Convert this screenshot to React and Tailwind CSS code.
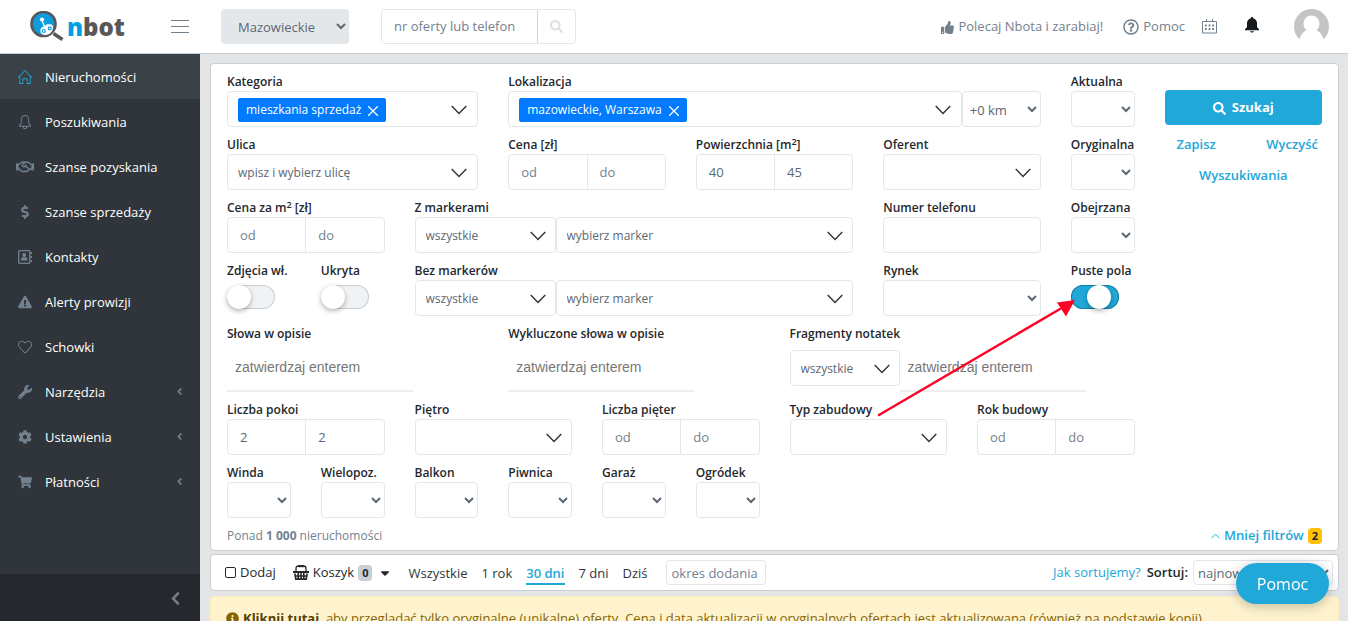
import {
  FaAngleLeft,
  FaCaretDown,
  FaChevronLeft,
  FaCog,
  FaDollarSign,
  FaExclamationTriangle,
  FaInfoCircle,
  FaRegHandshake,
  FaRegQuestionCircle,
  FaSearch,
  FaShoppingCart,
  FaThumbsUp,
  FaWrench,
} from 'react-icons/fa';
import { SlBell, SlHeart, SlHome } from 'react-icons/sl';

const MENU = [
  { label: 'Nieruchomości', icon: SlHome, active: true },
  { label: 'Poszukiwania', icon: SlBell },
  { label: 'Szanse pozyskania', icon: FaRegHandshake, wide: true },
  { label: 'Szanse sprzedaży', icon: FaDollarSign },
  { label: 'Kontakty', icon: ContactsIcon },
  { label: 'Alerty prowizji', icon: FaExclamationTriangle },
  { label: 'Schowki', icon: SlHeart },
  { label: 'Narzędzia', icon: FaWrench, nested: true },
  { label: 'Ustawienia', icon: FaCog, nested: true },
  { label: 'Płatności', icon: FaShoppingCart, nested: true },
];

const PERIODS = ['Wszystkie', '1 rok', '30 dni', '7 dni', 'Dziś'];

const BOX = 'h-9 rounded border border-[#e4e7ea] bg-white text-[#5c6873]';

function Logo() {
  return (
    <a href="#" className="flex w-[141px] items-center gap-[3px] pl-[30px]" aria-label="nbot">
      <svg width="34" height="32" viewBox="0 0 34 32" className="shrink-0">
        <circle cx="13.5" cy="13" r="12" fill="#0e9ddc" stroke="#58585a" strokeWidth="2.6" />
        <path d="M23.500 22.500l9 6" stroke="#58585a" strokeWidth="3.500" />
        <path d="M12 9.500l2.500 6" stroke="#fff" strokeWidth="1.300" />
        <circle cx="12" cy="8.500" r="2.100" fill="#fff" />
        <path d="M10.500 20.500c-.5-3 1.500-5 4.500-5.500 1-1.500 2.500-2 4-1.600 2-.6 4 .6 4 2.600.2 4-3 8-7.500 8-3 0-4.800-1.200-5-3.500z" fill="#fff" />
        <circle cx="13.800" cy="20" r="1.500" fill="#fff" stroke="#0e9ddc" strokeWidth="1.200" />
        <circle cx="19.800" cy="17.300" r="1.500" fill="#fff" stroke="#0e9ddc" strokeWidth="1.200" />
      </svg>
      <span className="text-2xl font-extrabold leading-8 text-[#58585a]">
        <span className="text-[#00a0e3]">n</span>bot
      </span>
    </a>
  );
}

function ContactsIcon() {
  return (
    <svg width="14" height="14" viewBox="0 0 14 14" fill="currentColor">
      <rect x="0.700" y="0.700" width="11.100" height="12.600" rx="1" fill="none" stroke="currentColor" strokeWidth="1.300" />
      <circle cx="6.200" cy="5" r="1.900" />
      <path d="M2.900 10.600c0-2.400.9-3.600 1.900-3.600.8.600 2 .6 2.800 0 1 0 1.900 1.200 1.900 3.600z" />
      <path d="M12.400 2H14v2h-1.600zM12.400 6H14v2h-1.600zM12.400 10H14v2h-1.600z" />
    </svg>
  );
}

function CalendarIcon() {
  return (
    <svg width="15" height="15" viewBox="0 0 15 15" fill="none" stroke="#73818f">
      <path d="M.5 2.500h14v11.500h-14zM4.500 0v3M10.500 0v3" />
      <path d="M3 6.500h9M3 10h9" strokeWidth="2" strokeDasharray="1.800 1.800" />
    </svg>
  );
}

function BellIcon() {
  return (
    <svg width="14" height="16" viewBox="0 0 14 16" fill="#181b1e">
      <path d="M7 0c.8 0 1.200.5 1.200 1.200C10.500 1.800 12 3.700 12 6v4l2 2.300v.9H0v-.9L2 10V6c0-2.300 1.500-4.200 3.800-4.800C5.800.5 6.200 0 7 0zM5 14.200h4c-.2.900-1 1.400-2 1.400s-1.800-.5-2-1.400z" />
    </svg>
  );
}

function BasketIcon() {
  return (
    <svg width="16" height="15" viewBox="0 0 16 15" fill="none" stroke="#23282c">
      <path d="M3 6V3.500C3 1.700 4 1 5.500 1h5C12 1 13 1.700 13 3.500V6" strokeWidth="1.300" />
      <path d="M5 1.200h6" strokeWidth="2" />
      <path d="M0 6h16v2H0z" fill="#23282c" stroke="none" />
      <path d="M1.800 8.500l1 5.600h10.400l1-5.600M5.200 8v6M8 8v6M10.800 8v6M2.500 11h11" strokeWidth="1.600" />
    </svg>
  );
}

function Avatar() {
  return (
    <svg width="35" height="35" viewBox="0 0 35 35">
      <circle cx="17.500" cy="17.500" r="17.500" fill="#c4c4c4" />
      <path d="M17.500 6.500a8 8 0 0 1 8 8c0 3-1.200 5.300-3 6.700 3.300 1.200 5.500 4.300 7 8.800v5h-24v-5c1.500-4.500 3.700-7.600 7-8.800-1.800-1.400-3-3.700-3-6.700a8 8 0 0 1 8-8z" fill="#fff" />
    </svg>
  );
}

function Chevron() {
  return (
    <svg width="16" height="10" viewBox="0 0 16 10" fill="none" stroke="#333" strokeWidth="1.400" className="shrink-0">
      <path d="M.7.9L8 8.600 15.300.9" />
    </svg>
  );
}

function Header() {
  return (
    <header className="flex h-[54px] shrink-0 items-center border-b border-[#c8ced3] bg-white text-[13px] text-[#73818f]">
      <Logo />
      <button type="button" aria-label="Menu" className="ml-[30px]">
        <svg width="18" height="16" viewBox="0 0 18 16" stroke="#73818f">
          <path d="M0 1.500h18M0 7.500h18M0 13.500h18" />
        </svg>
      </button>
      <select aria-label="Województwo" className="ml-8 h-[35px] w-32 rounded bg-[#e4e7ea] pl-[13px] text-[#5c6873]">
        <option>Mazowieckie</option>
      </select>
      <form className="ml-8 flex h-[35px] w-[195px] rounded border border-[#e4e7ea]">
        <input
          aria-label="Szukaj oferty"
          placeholder="nr oferty lub telefon"
          className="min-w-0 flex-1 px-3 pt-px placeholder:text-[#73818f]"
        />
        <button type="button" aria-label="Szukaj" className="flex w-[38px] items-center justify-center border-l border-[#d0d5d9] text-[#dcdfe2]">
          <FaSearch size={13} />
        </button>
      </form>
      <div className="ml-auto flex items-center pr-[19px]">
        <a href="#" className="flex items-center gap-1 pt-px">
          <FaThumbsUp size={13} />
          Polecaj Nbota i zarabiaj!
        </a>
        <a href="#" className="ml-5 flex items-center gap-1 pt-px">
          <FaRegQuestionCircle size={16} />
          Pomoc
        </a>
        <button type="button" aria-label="Kalendarz" className="ml-[17px]">
          <CalendarIcon />
        </button>
        <button type="button" aria-label="Powiadomienia" className="ml-7 pb-1">
          <BellIcon />
        </button>
        <button type="button" aria-label="Konto" className="ml-[35px]">
          <Avatar />
        </button>
      </div>
    </header>
  );
}

function Sidebar() {
  return (
    <aside className="flex w-[200px] shrink-0 flex-col bg-[#2f353a] text-white">
      <nav className="flex-1 text-[13px]">
        {MENU.map(({ label, icon: Icon, active, nested, wide }) => (
          <a key={label} href="#" className={`flex h-[45px] items-center pl-4 pr-[15px] ${active ? 'bg-[#3a4248]' : ''}`}>
            <span className={`mr-[11px] flex w-[18px] justify-center ${active ? 'text-[#20a8d8]' : 'text-[#73818f]'}`}>
              <Icon size={wide ? 18 : 14} />
            </span>
            <span className="pt-0.5">{label}</span>
            {nested && <FaAngleLeft size={11} className="ml-auto text-[#73818f]" />}
          </a>
        ))}
      </nav>
      <button type="button" aria-label="Zwiń menu" className="flex h-[47px] items-center justify-end bg-[#25292d] pr-[17px] pt-0.5 text-[#73818f]">
        <FaChevronLeft size={15} />
      </button>
    </aside>
  );
}

function Field({ label, htmlFor, className = '', children }) {
  return (
    <div className={`min-w-0 ${className}`}>
      <label htmlFor={htmlFor} className="block h-[18px] whitespace-nowrap text-xs font-semibold leading-[18px] text-[#23282c]">
        {label}
      </label>
      {children}
    </div>
  );
}

function SmallSelect({ id, label, className = '' }) {
  return (
    <Field label={label} htmlFor={id} className={className}>
      <select id={id} className={`${BOX} w-full pr-[5px]`}>
        <option></option>
      </select>
    </Field>
  );
}

function BigSelect({ id, value = '', ariaLabel, className = 'w-full' }) {
  return (
    <div className={`relative ${className}`}>
      <select id={id} aria-label={ariaLabel} className={`${BOX} w-full appearance-none pl-2.5 pr-9 pt-0.5 text-xs`}>
        <option>{value}</option>
      </select>
      <span className="pointer-events-none absolute inset-y-0 right-2.5 flex items-center pt-0.5">
        <Chevron />
      </span>
    </div>
  );
}

function Tags({ id, value, className = '' }) {
  return (
    <div className={`${BOX} flex items-center px-2.5 pt-0.5 ${className}`}>
      <span className="flex h-6 items-center gap-[7px] rounded-xs bg-[#007bff] px-2 text-xs text-white">
        {value}
        <button type="button" aria-label={`Usuń ${value}`}>
          <svg width="10" height="10" viewBox="0 0 10 10" stroke="#fff" strokeWidth="1.300" className="mt-0.5">
            <path d="M0 0l10 10M10 0L0 10" />
          </svg>
        </button>
      </span>
      <button id={id} type="button" aria-label="Rozwiń" className="ml-auto">
        <Chevron />
      </button>
    </div>
  );
}

function Range({ id, label, from, to }) {
  const input = 'min-w-0 flex-1 px-3 pt-0.5 placeholder:text-[#73818f]';
  return (
    <Field label={label} htmlFor={id} className="col-span-2">
      <div className={`${BOX} flex divide-x divide-[#e4e7ea] text-[13px]`}>
        <input id={id} placeholder="od" defaultValue={from} className={input} />
        <input aria-label="do" placeholder="do" defaultValue={to} className={input} />
      </div>
    </Field>
  );
}

function Toggle({ id, label, checked }) {
  return (
    <Field label={label} htmlFor={id}>
      <input
        id={id}
        type="checkbox"
        defaultChecked={checked}
        className="mt-[5px] block h-6 w-12 appearance-none rounded-full bg-[#f0f3f5] inset-ring inset-ring-[#c8ced3] before:block before:size-6 before:rounded-full before:bg-white before:shadow-[0_2px_5px_rgba(0,0,0,0.3)] before:content-[''] checked:bg-[#20a8d8] checked:inset-ring-[#187da0] checked:before:translate-x-4"
      />
    </Field>
  );
}

function Markers({ id, label }) {
  return (
    <Field label={label} htmlFor={id} className="col-span-5">
      <div className="flex">
        <BigSelect id={id} value="wszystkie" className="w-[141px]" />
        <BigSelect ariaLabel={`${label} - marker`} value="wybierz marker" className="flex-1" />
      </div>
    </Field>
  );
}

function WordInput({ id, ariaLabel }) {
  return (
    <input
      id={id}
      aria-label={ariaLabel}
      placeholder="zatwierdzaj enterem"
      className="block h-[49px] w-[186px] border-b-2 border-[#eee] px-2 font-['Liberation_Sans',sans-serif] text-sm placeholder:text-[#777]"
    />
  );
}

// Czerwona strzałka wskazująca przełącznik "Puste pola"
function Arrow() {
  return (
    <svg width="200" height="122" viewBox="0 0 200 122" className="pointer-events-none absolute right-[262px] top-[234px]">
      <path d="M3 117L184 11" stroke="#ff0026" strokeWidth="2.500" strokeLinecap="round" />
      <path d="M199 2l-18 2.500 9 14z" fill="#ff0026" />
    </svg>
  );
}

function Filters() {
  return (
    <section className="relative rounded border border-[#c8ced3] bg-white px-4 pt-[9px]">
      <div className="grid grid-cols-12 gap-x-[30px] gap-y-[9px] text-[13px]">
        <div className="col-span-2 col-start-11 row-span-3 row-start-1 pt-[17px] font-semibold text-[#20a8d8]">
          <button type="button" className="flex h-[35px] w-full items-center justify-center gap-1.5 rounded bg-[#20a8d8] pt-px font-bold text-white">
            <FaSearch size={13} />
            Szukaj
          </button>
          <div className="mt-2 flex justify-between pl-3 pr-1 leading-[23px]">
            <a href="#">Zapisz</a>
            <a href="#">Wyczyść</a>
          </div>
          <a href="#" className="mt-2 block text-center leading-[23px]">Wyszukiwania</a>
        </div>

        <Field label="Kategoria" htmlFor="kategoria" className="col-span-3">
          <Tags id="kategoria" value="mieszkania sprzedaż" />
        </Field>
        <Field label="Lokalizacja" htmlFor="lokalizacja" className="col-span-6">
          <div className="flex">
            <Tags id="lokalizacja" value="mazowieckie, Warszawa" className="flex-1" />
            <select aria-label="Promień" className={`${BOX} w-[79px] pl-[3px] pr-[5px] pt-px`}>
              <option>+0 km</option>
            </select>
          </div>
        </Field>
        <SmallSelect id="aktualna" label="Aktualna" />

        <Field label="Ulica" htmlFor="ulica" className="col-span-3">
          <div className={`${BOX} flex items-center px-2.5 pt-0.5 text-xs`}>
            <input id="ulica" placeholder="wpisz i wybierz ulicę" className="min-w-0 flex-1 placeholder:text-[#5c6873]" />
            <Chevron />
          </div>
        </Field>
        <Range id="cena" label="Cena [zł]" />
        <Range id="powierzchnia" label={<>Powierzchnia [m<sup>2</sup>]</>} from="40" to="45" />
        <Field label="Oferent" htmlFor="oferent" className="col-span-2">
          <BigSelect id="oferent" />
        </Field>
        <SmallSelect id="oryginalna" label="Oryginalna" />

        <Range id="cena-m2" label={<>Cena za m<sup>2</sup> [zł]</>} />
        <Markers id="z-markerami" label="Z markerami" />
        <Field label="Numer telefonu" htmlFor="telefon" className="col-span-2">
          <input id="telefon" className={`${BOX} w-full px-3`} />
        </Field>
        <SmallSelect id="obejrzana" label="Obejrzana" />

        <Toggle id="zdjecia" label="Zdjęcia wł." />
        <Toggle id="ukryta" label="Ukryta" />
        <Markers id="bez-markerow" label="Bez markerów" />
        <SmallSelect id="rynek" label="Rynek" className="col-span-2" />
        <Toggle id="puste" label="Puste pola" checked />

        <Field label="Słowa w opisie" htmlFor="slowa" className="col-span-3">
          <WordInput id="slowa" />
        </Field>
        <Field label="Wykluczone słowa w opisie" htmlFor="wykluczone" className="col-span-3">
          <WordInput id="wykluczone" />
        </Field>
        <Field label="Fragmenty notatek" htmlFor="notatki" className="col-span-4">
          <div className="flex items-center">
            <BigSelect id="notatki" value="wszystkie" className="w-[110px]" />
            <WordInput ariaLabel="Fragment notatki" />
          </div>
        </Field>

        <div className="col-span-10 col-start-1 grid grid-cols-subgrid">
          <Range id="pokoje" label="Liczba pokoi" from="2" to="2" />
          <Field label="Piętro" htmlFor="pietro" className="col-span-2">
            <BigSelect id="pietro" />
          </Field>
          <Range id="pietra" label="Liczba pięter" />
          <Field label="Typ zabudowy" htmlFor="typ" className="col-span-2">
            <BigSelect id="typ" />
          </Field>
          <Range id="rok" label="Rok budowy" />
        </div>

        <div className="col-span-10 col-start-1 grid grid-cols-subgrid">
          <SmallSelect id="winda" label="Winda" />
          <SmallSelect id="wielopoz" label="Wielopoz." />
          <SmallSelect id="balkon" label="Balkon" />
          <SmallSelect id="piwnica" label="Piwnica" />
          <SmallSelect id="garaz" label="Garaż" />
          <SmallSelect id="ogrodek" label="Ogródek" />
        </div>
      </div>

      <div className="flex h-8 items-center justify-between pt-1 text-[#73818f]">
        <p className="text-xs">
          Ponad <strong>1 000</strong> nieruchomości
        </p>
        <button type="button" className="flex items-center gap-1 text-[13px] font-semibold text-[#20a8d8]">
          <svg width="9" height="6" viewBox="0 0 9 6" fill="none" stroke="currentColor">
            <path d="M.5 5.200l4-4 4 4" />
          </svg>
          Mniej filtrów
          <span className="rounded bg-[#ffc107] px-1 text-[11px] font-bold leading-4 text-[#23282c]">2</span>
        </button>
      </div>
      <Arrow />
    </section>
  );
}

function Toolbar() {
  return (
    <section className="mt-[3px] flex h-[37px] items-center rounded border border-[#c8ced3] bg-white pl-3.5 pr-[5px] text-[13px] text-[#23282c]">
      <label className="flex items-center gap-1">
        <input type="checkbox" className="size-[11px] appearance-none rounded-xs border border-[#23282c]" />
        Dodaj
      </label>
      <button type="button" className="ml-[17px] flex items-center gap-1">
        <BasketIcon />
        Koszyk
        <span className="rounded bg-[#c8ced3] px-1 text-[11px] font-bold leading-4">0</span>
        <FaCaretDown size={14} className="ml-0.5" />
      </button>
      <div className="ml-4 flex gap-3.5">
        {PERIODS.map((period) => (
          <button
            key={period}
            type="button"
            className={`border-b-2 pt-0.5 leading-5 ${
              period === '30 dni' ? 'border-[#20a8d8] font-semibold text-[#20a8d8]' : 'border-transparent text-[#2f353a]'
            }`}
          >
            {period}
          </button>
        ))}
      </div>
      <input
        aria-label="okres dodania"
        placeholder="okres dodania"
        className="ml-[18px] h-[25px] w-[100px] rounded border border-[#e4e7ea] px-[5px] placeholder:text-[#73818f]"
      />
      <a href="#" className="ml-auto text-[#20a8d8]">Jak sortujemy?</a>
      <label htmlFor="sortuj" className="ml-1.5 font-semibold">Sortuj:</label>
      <select id="sortuj" className="ml-[5px] h-[25px] w-[140px] rounded border border-[#e4e7ea] bg-white text-[#5c6873]">
        <option>najnowsze</option>
      </select>
    </section>
  );
}

export default function App() {
  return (
    <div className="flex h-screen flex-col overflow-hidden bg-[#e4e5e6] font-['Open_Sans',sans-serif]">
      <Header />
      <div className="flex min-h-0 flex-1">
        <Sidebar />
        <main className="min-w-0 flex-1 overflow-hidden pl-2.5 pr-[9px] pt-[9px]">
          <Filters />
          <Toolbar />
          <div className="mt-[5px] flex items-center gap-1 whitespace-nowrap rounded border border-[#ffeeba] bg-[#fff3cd] px-[15px] py-[11px] text-[13px] leading-5 text-[#856404]">
            <FaInfoCircle size={13} className="shrink-0" />
            <p>
              <a href="#" className="font-bold text-[#533f03]">Kliknij tutaj</a>, aby przeglądać tylko oryginalne (unikalne) oferty. Cena i data aktualizacji w oryginalnych ofertach jest aktualizowana (również na podstawie kopii).
            </p>
          </div>
        </main>
      </div>
      <button type="button" className="fixed bottom-[17px] right-[19px] h-[41px] w-[93px] rounded-full bg-[#20a8d8] text-base text-white shadow-[0_2px_12px_rgba(0,0,0,0.25)]">
        Pomoc
      </button>
    </div>
  );
}
